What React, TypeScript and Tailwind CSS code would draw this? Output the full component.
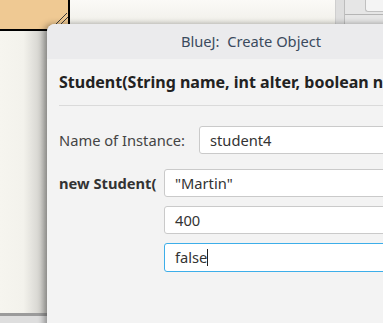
export default function App() {
  return (
    <div className="relative w-[383px] h-[323px] overflow-hidden bg-[#f6f5ef] font-['Noto_Sans',sans-serif]">
      {/* background editor window */}
      <div className="flex h-[31px]">
        <div className="relative w-[70px] h-[31px] bg-[#efc993] border-r-2 border-b-2 border-black">
          <svg className="absolute left-0 top-0" width="68" height="29" viewBox="0 0 68 29">
            <path d="M55 25 L67 13 M60 25 L68 17" stroke="#3a3a3a" strokeWidth="1" />
          </svg>
        </div>
        <div className="w-[266px] h-[24px] bg-gradient-to-b from-[#fbfaf7] to-[#f1f0ea] border-r border-[#cfcfcf]" />
        <div className="flex-1 h-[24px] flex bg-[#e6e6e6]">
          <div className="w-[9px] border-r border-[#bdbdbd] bg-[#dedede]" />
          <div className="flex-1 flex flex-col">
            <div className="h-[12px] ml-[20px] border-l border-b border-[#c0c0c0] rounded-bl-[3px] bg-[#f4f4f4]" />
            <div className="h-[3px] border-b border-[#b5b5b5]" />
          </div>
        </div>
      </div>
      <div className="absolute left-0 top-[31px] w-[47px] h-[282px] bg-gradient-to-r from-[#f6f5ef] via-[#f3f2ec] to-[#c9c8c4]" />
      <div className="absolute left-0 top-[313px] w-[47px] h-[3px] bg-[#9b9b9b]" />
      <div className="absolute left-0 top-[316px] w-[47px] h-[7px] bg-[#dedede]" />

      {/* dialog window */}
      <div className="absolute left-[47px] top-[24px] w-[360px] h-[320px] rounded-tl-[8px] bg-[#f3f3f3] shadow-[-3px_0_6px_rgba(0,0,0,0.35)] overflow-hidden">
        <div className="h-[35px] bg-[#ebebed] flex items-center justify-center pl-[48px]">
          <span className="text-[14.7px] text-[#3b4a5d] whitespace-pre">BlueJ:  Create Object</span>
        </div>
        <div className="pl-[12px]">
          <div className="h-[46px] flex items-center whitespace-nowrap">
            <span className="text-[16px] font-bold text-[#222]">Student(String name, int alter, boolean name)</span>
          </div>
          <div className="h-px bg-[#dadada]" />
          <div className="mt-[20px] flex items-center">
            <span className="w-[140px] text-[14.7px] text-[#444]">Name of Instance:</span>
            <div className="flex-1 h-[28px] bg-white border border-[#cacaca] rounded-[3px] flex items-center pl-[10px] text-[14.7px] text-[#333]">
              student4
            </div>
          </div>
          <div className="mt-[15px] flex">
            <span className="w-[105px] h-[28px] flex items-center text-[14.7px] font-bold text-[#333] whitespace-nowrap">new Student(</span>
            <div className="flex-1 flex flex-col gap-[9px]">
              <div className="h-[28px] bg-white border border-[#cacaca] rounded-[3px] flex items-center pl-[10px] text-[14.7px] text-[#333]">
                "Martin"
              </div>
              <div className="h-[28px] bg-white border border-[#cacaca] rounded-[3px] flex items-center pl-[10px] text-[14.7px] text-[#333]">
                400
              </div>
              <div className="h-[29px] bg-white border border-[#3daee9] rounded-[3px] flex items-center pl-[10px] text-[14.7px] text-[#333]">
                false
                <span className="inline-block w-px h-[17px] bg-[#222]" />
              </div>
            </div>
          </div>
        </div>
      </div>
    </div>
  );
}
